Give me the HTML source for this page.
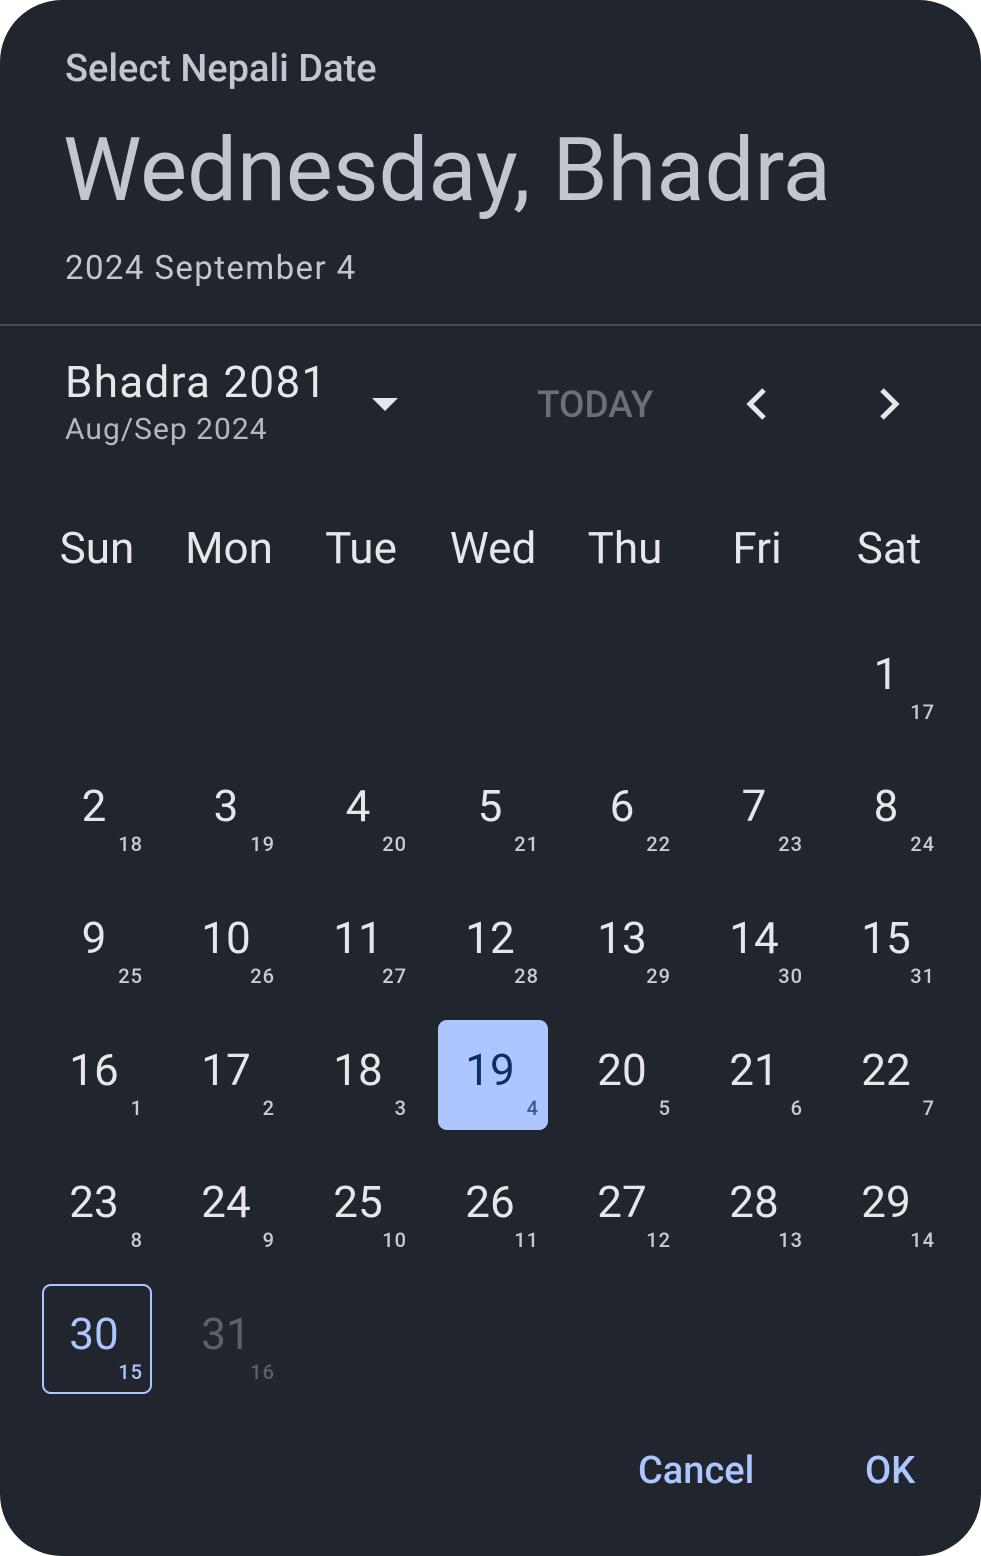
<!DOCTYPE html><html><head><style>
body{margin:0;background:#fff;width:981px;height:1556px;overflow:hidden;font-family:"Roboto","Liberation Sans",sans-serif}
.card{position:absolute;left:0;top:0;width:981px;height:1556px;background:#21252e;border-radius:62px;overflow:hidden}
.t{position:absolute;white-space:nowrap;line-height:1}
.c{position:absolute;width:110px;height:110px;box-sizing:border-box;border-radius:9px}
.c b{position:absolute;left:0;width:104px;text-align:center;top:28px;font-weight:400;font-size:44px;color:#e6e7ea;line-height:1}
.c i{position:absolute;right:9px;top:78px;font-style:normal;font-weight:500;font-size:20px;color:#c9cbd0;letter-spacing:1px;line-height:1}
.w{position:absolute;top:526px;width:132px;text-align:center;font-size:44px;color:#e6e7ea;line-height:1}
</style></head><body><div class="card">
<div class="t" style="left:65px;top:50px;font-size:38px;font-weight:500;color:#c4c6cf">Select Nepali Date</div>
<div class="t" style="left:63px;top:126px;font-size:88.5px;color:#c4c6cf">Wednesday, Bhadra</div>
<div class="t" style="left:65px;top:252px;font-size:33px;color:#c4c6cf;letter-spacing:1.4px">2024 September 4</div>
<div style="position:absolute;left:0;top:324px;width:981px;height:2px;background:#4a4b4e"></div>
<div class="t" style="left:65px;top:360px;font-size:44px;color:#e6e7ea;letter-spacing:1.3px">Bhadra 2081</div>
<div class="t" style="left:65px;top:415px;font-size:30px;color:#b5b7bc;letter-spacing:1px">Aug/Sep 2024</div>
<div style="position:absolute;left:372px;top:398px;width:0;height:0;border-left:13px solid transparent;border-right:13px solid transparent;border-top:13px solid #e6e7ea"></div>
<div class="t" style="left:537px;top:387px;font-size:37px;font-weight:500;color:#6b6f78">TODAY</div>
<svg style="position:absolute;left:740px;top:384px" width="40" height="40"><path d="M24 6 L10 20 L24 34" stroke="#e6e7ea" stroke-width="5" fill="none"/></svg>
<svg style="position:absolute;left:870px;top:384px" width="40" height="40"><path d="M12 6 L26 20 L12 34" stroke="#e6e7ea" stroke-width="5" fill="none"/></svg>
<div class="w" style="left:31px">Sun</div><div class="w" style="left:163px">Mon</div><div class="w" style="left:295px">Tue</div><div class="w" style="left:427px">Wed</div><div class="w" style="left:559px">Thu</div><div class="w" style="left:691px">Fri</div><div class="w" style="left:823px">Sat</div>
<div class="c" style="left:834px;top:624px"><b>1</b><i>17</i></div>
<div class="c" style="left:42px;top:756px"><b>2</b><i>18</i></div>
<div class="c" style="left:174px;top:756px"><b>3</b><i>19</i></div>
<div class="c" style="left:306px;top:756px"><b>4</b><i>20</i></div>
<div class="c" style="left:438px;top:756px"><b>5</b><i>21</i></div>
<div class="c" style="left:570px;top:756px"><b>6</b><i>22</i></div>
<div class="c" style="left:702px;top:756px"><b>7</b><i>23</i></div>
<div class="c" style="left:834px;top:756px"><b>8</b><i>24</i></div>
<div class="c" style="left:42px;top:888px"><b>9</b><i>25</i></div>
<div class="c" style="left:174px;top:888px"><b>10</b><i>26</i></div>
<div class="c" style="left:306px;top:888px"><b>11</b><i>27</i></div>
<div class="c" style="left:438px;top:888px"><b>12</b><i>28</i></div>
<div class="c" style="left:570px;top:888px"><b>13</b><i>29</i></div>
<div class="c" style="left:702px;top:888px"><b>14</b><i>30</i></div>
<div class="c" style="left:834px;top:888px"><b>15</b><i>31</i></div>
<div class="c" style="left:42px;top:1020px"><b>16</b><i>1</i></div>
<div class="c" style="left:174px;top:1020px"><b>17</b><i>2</i></div>
<div class="c" style="left:306px;top:1020px"><b>18</b><i>3</i></div>
<div class="c" style="left:438px;top:1020px;background:#adc6ff"><b style="color:#0f2d5e">19</b><i style="color:#3a5a8e">4</i></div>
<div class="c" style="left:570px;top:1020px"><b>20</b><i>5</i></div>
<div class="c" style="left:702px;top:1020px"><b>21</b><i>6</i></div>
<div class="c" style="left:834px;top:1020px"><b>22</b><i>7</i></div>
<div class="c" style="left:42px;top:1152px"><b>23</b><i>8</i></div>
<div class="c" style="left:174px;top:1152px"><b>24</b><i>9</i></div>
<div class="c" style="left:306px;top:1152px"><b>25</b><i>10</i></div>
<div class="c" style="left:438px;top:1152px"><b>26</b><i>11</i></div>
<div class="c" style="left:570px;top:1152px"><b>27</b><i>12</i></div>
<div class="c" style="left:702px;top:1152px"><b>28</b><i>13</i></div>
<div class="c" style="left:834px;top:1152px"><b>29</b><i>14</i></div>
<div class="c" style="left:42px;top:1284px;border:2px solid #adc6ff"><b style="color:#adc6ff;top:26px;left:-2px">30</b><i style="color:#adc6ff;right:7px;top:76px">15</i></div>
<div class="c" style="left:174px;top:1284px"><b style="color:#5d6068">31</b><i style="color:#5d6068">16</i></div>
<div class="t" style="left:638px;top:1452px;font-size:38px;font-weight:500;color:#adc6ff">Cancel</div>
<div class="t" style="left:865px;top:1452px;font-size:38px;font-weight:500;color:#adc6ff">OK</div>
</div></body></html>
